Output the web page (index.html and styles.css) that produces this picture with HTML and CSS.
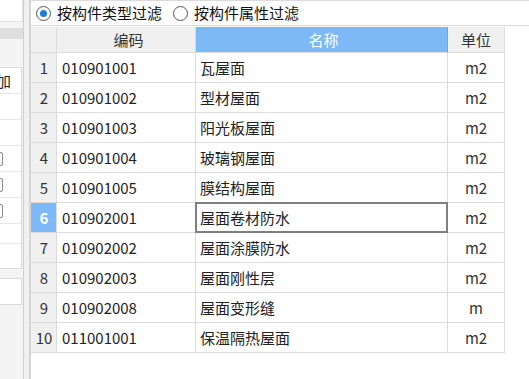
FILE: index.html
```html
<!DOCTYPE html>
<html>
<head>
<meta charset="utf-8">
<link rel="stylesheet" href="styles.css">
</head>
<body>
<div class="app">
  <div class="left">
    <div class="top-box"></div>
    <div class="bar"></div>
    <div class="list">
      <div class="lrow"><span class="lt">加</span></div>
      <div class="lrow"></div>
      <div class="lrow"></div>
      <div class="lrow"><span class="chk"></span></div>
      <div class="lrow"><span class="chk"></span></div>
      <div class="lrow"><span class="chk"></span></div>
      <div class="lrow short"></div>
      <div class="lrow end"></div>
    </div>
    <div class="list second">
      <div class="lrow end"></div>
    </div>
  </div>
  <div class="splitter"></div>
  <div class="main">
    <div class="radios">
      <label class="radio"><span class="dot on"></span>按构件类型过滤</label>
      <label class="radio"><span class="dot"></span>按构件属性过滤</label>
    </div>
    <div class="grid">
      <div class="row head">
        <div class="c num"></div>
        <div class="c code ctr">编码</div>
        <div class="c name ctr sel-head">名称</div>
        <div class="c unit ctr">单位</div>
      </div>
      <div class="row"><div class="c num">1</div><div class="c code">010901001</div><div class="c name">瓦屋面</div><div class="c unit ctr">m2</div></div>
      <div class="row"><div class="c num">2</div><div class="c code">010901002</div><div class="c name">型材屋面</div><div class="c unit ctr">m2</div></div>
      <div class="row"><div class="c num">3</div><div class="c code">010901003</div><div class="c name">阳光板屋面</div><div class="c unit ctr">m2</div></div>
      <div class="row"><div class="c num">4</div><div class="c code">010901004</div><div class="c name">玻璃钢屋面</div><div class="c unit ctr">m2</div></div>
      <div class="row"><div class="c num">5</div><div class="c code">010901005</div><div class="c name">膜结构屋面</div><div class="c unit ctr">m2</div></div>
      <div class="row"><div class="c num active">6</div><div class="c code">010902001</div><div class="c name focus">屋面卷材防水</div><div class="c unit ctr">m2</div></div>
      <div class="row"><div class="c num">7</div><div class="c code">010902002</div><div class="c name">屋面涂膜防水</div><div class="c unit ctr">m2</div></div>
      <div class="row"><div class="c num">8</div><div class="c code">010902003</div><div class="c name">屋面刚性层</div><div class="c unit ctr">m2</div></div>
      <div class="row"><div class="c num">9</div><div class="c code">010902008</div><div class="c name">屋面变形缝</div><div class="c unit ctr">m</div></div>
      <div class="row"><div class="c num">10</div><div class="c code">011001001</div><div class="c name">保温隔热屋面</div><div class="c unit ctr">m2</div></div>
    </div>
  </div>
</div>
</body>
</html>
```

FILE: styles.css
```css
* { box-sizing: border-box; }
html, body { margin: 0; padding: 0; }
body {
  width: 529px;
  height: 379px;
  overflow: hidden;
  background: #fff;
  font-family: "Noto Sans CJK SC", "Noto Sans", sans-serif;
  font-size: 15px;
  color: #222;
}
.app {
  display: flex;
  height: 379px;
}
.left {
  width: 23px;
  flex: none;
  background: #f4f4f4;
  display: flex;
  flex-direction: column;
  overflow: hidden;
}
.top-box {
  height: 22px;
  background: #fff;
  border-right: 1px solid #e2e2e2;
  border-bottom: 1px solid #e2e2e2;
}
.bar {
  margin-top: 6px;
  height: 11px;
  background: #dedede;
}
.list {
  margin-top: 28px;
  background: #fff;
  border-top: 1px solid #d9d9d9;
  border-right: 1px solid #d9d9d9;
  width: 22px;
}
.list.second {
  margin-top: 9px;
}
.lrow {
  height: 26px;
  border-bottom: 1px solid #e6e6e6;
  display: flex;
  align-items: center;
  justify-content: flex-end;
  overflow: hidden;
}
.lrow.short { height: 20px; }
.lrow.end { height: 25px; border-bottom-color: #d9d9d9; }
.list.second .lrow.end { height: 26px; }
.lt {
  font-size: 15px;
  color: #222;
  margin-right: 10px;
  white-space: nowrap;
}
.chk {
  width: 14px;
  height: 14px;
  border: 1px solid #8a8a8a;
  border-radius: 2px;
  margin-right: 18px;
  flex: none;
  background: #fff;
}
.splitter {
  width: 8px;
  flex: none;
  background: #f0f0f0;
  border-left: 1px solid #cfcfcf;
  border-right: 2px solid #d5d5d5;
}
.main {
  flex: 1;
  background: #fff;
  display: flex;
  flex-direction: column;
}
.radios {
  height: 26px;
  border-top: 1px solid #dadada;
  border-bottom: 1px solid #d8d8d8;
  margin-bottom: 1px;
  display: flex;
  align-items: center;
  padding-left: 5px;
  gap: 11px;
  flex: none;
}
.radio {
  display: flex;
  align-items: center;
  gap: 6px;
  color: #111;
  line-height: 20px;
}
.dot {
  width: 15px;
  height: 15px;
  border-radius: 50%;
  border: 1px solid #555;
  background: #fff;
  display: flex;
  align-items: center;
  justify-content: center;
  flex: none;
}
.dot.on::after {
  content: "";
  width: 7px;
  height: 7px;
  border-radius: 50%;
  background: #1a7de0;
}
.grid {
  display: flex;
  flex-direction: column;
  width: 474px;
}
.row {
  display: grid;
  grid-template-columns: 26px 139px 252px 57px;
  height: 30px;
}
.row.head { height: 26px; }
.c {
  border-right: 1px solid #dcdcdc;
  border-bottom: 1px solid #dcdcdc;
  display: flex;
  align-items: center;
  white-space: nowrap;
  overflow: hidden;
  line-height: 20px;
}
.head .c { background: #f0f0f0; color: #333; }
.head .c.sel-head { background: #7db9f6; color: #fff; border-right-color: #6aa8e8; }
.ctr { justify-content: center; }
.num {
  background: #f0f0f0;
  justify-content: center;
  color: #333;
  padding-left: 1px;
}
.num.active { background: #7db9f6; color: #fff; font-weight: bold; }
.code { padding-left: 5px; }
.name { padding-left: 4px; }
.unit { color: #333; }
.focus { position: relative; overflow: visible; }
.focus::after {
  content: "";
  position: absolute;
  left: -1px;
  top: -1px;
  right: -1px;
  bottom: -1px;
  border: 2px solid #7f7f7f;
}
```
